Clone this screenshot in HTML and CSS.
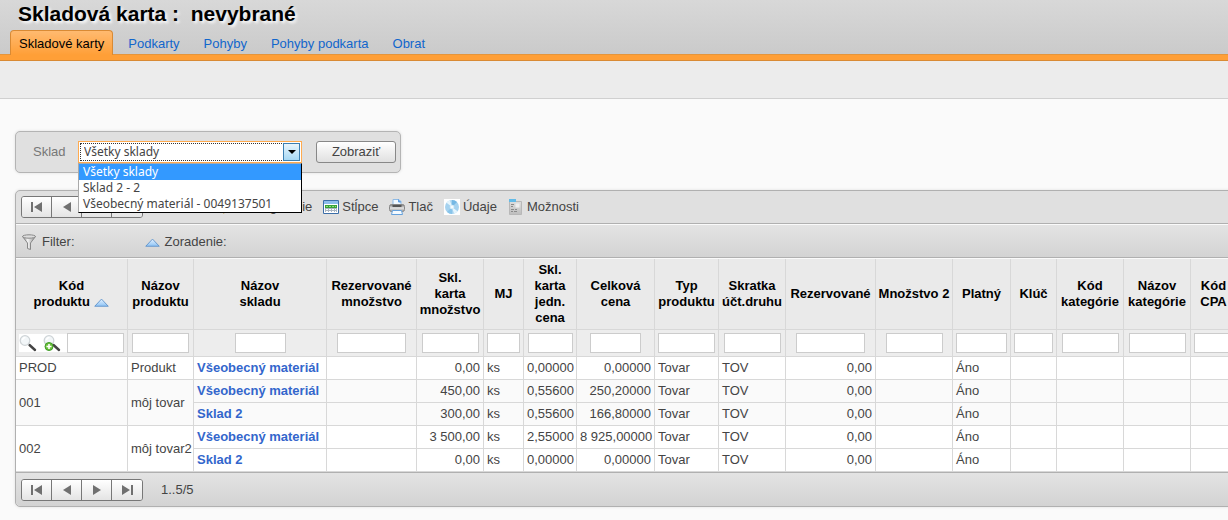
FILE: index.html
```html
<!DOCTYPE html>
<html lang="sk">
<head>
<meta charset="utf-8">
<title>Skladová karta</title>
<link rel="stylesheet" href="styles.css">
</head>
<body>
<svg class="defs" aria-hidden="true">
  <linearGradient id="sortFill" x1="0" y1="0" x2="0" y2="1"><stop offset="0" stop-color="#e6f3ff"/><stop offset="1" stop-color="#8cc2f5"/></linearGradient>
  <linearGradient id="steel" x1="0" y1="0" x2="1" y2="0"><stop offset="0" stop-color="#8a8a8a"/><stop offset=".4" stop-color="#f4f4f4"/><stop offset="1" stop-color="#8c8c8c"/></linearGradient>
  <linearGradient id="printer" x1="0" y1="0" x2="0" y2="1"><stop offset="0" stop-color="#777"/><stop offset=".5" stop-color="#e4e4e4"/><stop offset="1" stop-color="#999"/></linearGradient>
  <linearGradient id="sheet" x1="0" y1="0" x2="0" y2="1"><stop offset="0" stop-color="#dedede"/><stop offset="1" stop-color="#bdbdbd"/></linearGradient>
  <symbol id="i-sort" viewBox="0 0 14 8"><path d="M.7 7.5 7 .8l6.3 6.7z" fill="url(#sortFill)" stroke="#5a8fc8" stroke-width=".8"/></symbol>
  <symbol id="i-first" viewBox="0 0 12 10"><path d="M0 0h2v10H0zM11 0v10L3 5z" fill="#707070"/></symbol>
  <symbol id="i-prev" viewBox="0 0 12 10"><path d="M10 0v10L2 5z" fill="#707070"/></symbol>
  <symbol id="i-next" viewBox="0 0 12 10"><path d="M2 0v10l8-5z" fill="#707070"/></symbol>
  <symbol id="i-last" viewBox="0 0 12 10"><path d="M1 0v10l8-5zM10 0h2v10h-2z" fill="#707070"/></symbol>
  <symbol id="i-lens" viewBox="0 0 18 18"><path d="m10.500 11 5.500 5" stroke="#444" stroke-width="2.400" stroke-linecap="round"/><circle cx="6" cy="6.500" r="4.800" fill="#f2f6f8" stroke="#cfd4d7" stroke-width="1.300"/><path d="M3.500 6a3 3 0 0 1 3-2.500" fill="none" stroke="#fff" stroke-width="1.300"/></symbol>
</svg>

<header class="top">
  <h1 class="title">Skladová karta :&nbsp; nevybrané</h1>
  <nav class="tabs">
    <a class="tab tab-active" href="#karty">Skladové karty</a>
    <a class="tab" href="#podkarty">Podkarty</a>
    <a class="tab" href="#pohyby">Pohyby</a>
    <a class="tab" href="#pohyby-podkarta">Pohyby podkarta</a>
    <a class="tab" href="#obrat">Obrat</a>
  </nav>
</header>
<div class="band"></div>

<main class="content">
  <form class="search">
    <label class="search-label" for="sklad">Sklad</label>
    <div class="picker">
      <select class="select" id="sklad">
        <option>Všetky sklady</option>
        <option>Sklad 2 - 2</option>
        <option>Všeobecný materiál - 0049137501</option>
      </select>
      <span class="arrow"><svg width="8" height="4" viewBox="0 0 8 4"><path d="M0 0h8L4 4z"/></svg></span>
      <ul class="menu">
        <li class="menu-item menu-current">Všetky sklady</li>
        <li class="menu-item">Sklad 2 - 2</li>
        <li class="menu-item">Všeobecný materiál - 0049137501</li>
      </ul>
    </div>
    <button class="show" type="button">Zobraziť</button>
  </form>

  <section class="grid">
    <div class="bar toolbar">
      <div class="pager">
        <button class="page" type="button" aria-label="Prvá"><svg width="12" height="10"><use href="#i-first"/></svg></button>
        <button class="page" type="button" aria-label="Predošlá"><svg width="12" height="10"><use href="#i-prev"/></svg></button>
        <button class="page" type="button" aria-label="Ďalšia"><svg width="12" height="10"><use href="#i-next"/></svg></button>
        <button class="page" type="button" aria-label="Posledná"><svg width="12" height="10"><use href="#i-last"/></svg></button>
      </div>
      <div class="tools">
        <a class="tool" href="#konfiguracie"><svg width="16" height="16" viewBox="0 0 16 16"><path d="m2 14 1-4 8-8 3 3-8 8z" fill="#f5cf4d" stroke="#b78d23"/></svg>Konfigurácie</a>
        <a class="tool" href="#stlpce"><svg width="16" height="16" viewBox="0 0 16 16"><path d="M.5 1.500h15v13H.5z" fill="#fff" stroke="#3c6ea8"/><path d="M1 2h14v3H1z" fill="#8dbdec"/><path d="M2 6h12v3H2z" fill="#38a038"/><path d="M2 9h12v4H2z" fill="#aab6c2"/><path d="M3 7h2v1H3zm3 0h2v1H6zm3 0h2v1H9zm3 0h1v1h-1z" fill="#8be07d"/><path d="M3 10h2v1H3zm3 0h2v1H6zm3 0h2v1H9zm3 0h1v1h-1zM3 12h2v1H3zm3 0h2v1H6zm3 0h2v1H9zm3 0h1v1h-1z" fill="#fff"/></svg>Stĺpce</a>
        <a class="tool" href="#tlac"><svg width="16" height="16" viewBox="0 0 16 16"><path d="M4 7V.5h6l2 2V7z" fill="#f2f9ff" stroke="#8fbbe6"/><path d="M9.500.5V3H12" fill="#5d9ce0" stroke="#5d9ce0"/><rect x=".5" y="5.500" width="15" height="7" rx="2" fill="url(#printer)" stroke="#888"/><path d="M3.500 6h9v2h-9z" fill="#555"/><path d="M3.500 11.500h9l1 4h-11z" fill="#f4faff" stroke="#65a1dc"/></svg>Tlač</a>
        <a class="tool" href="#udaje"><svg width="16" height="16" viewBox="0 0 16 16"><path d="M0 0h16v16H0z" fill="#fff"/><circle cx="8" cy="8" r="7" fill="#a5d2ef"/><path d="M8 8 2.500 3.700A7 7 0 0 1 6 1.300zM8 8l5.500 4.300A7 7 0 0 1 10 14.700z" fill="#e5f5fd"/><path d="M8 8V1a7 7 0 0 1 5 2z" fill="#75b8e4"/><path d="M8 8v7a7 7 0 0 1-5-2z" fill="#88c4ea"/><circle cx="8" cy="8" r="2.300" fill="#d9edf8"/><circle cx="8" cy="8" r="1" fill="#fff"/></svg>Údaje</a>
        <a class="tool" href="#moznosti"><svg width="16" height="16" viewBox="0 0 16 16"><path d="M1.500 2.500h12v13h-12z" fill="url(#sheet)" stroke="#b8b8b8"/><path d="M1 0h7v3H1z" fill="#62bbe8"/><path d="M3 5.500h3M3 7.500h2M3 10.500h3M7 10.500h2M3 12.500h2M6 12.500h3" stroke="#8a8a8a"/><path d="M7.500 4.500h4v4h-4z" fill="#eee"/></svg>Možnosti</a>
      </div>
    </div>
    <div class="bar filters">
      <span class="tool"><svg width="16" height="16" viewBox="0 0 16 16"><path d="M1.500 2.500 6.500 9v5.500l3 1V9l5-6.500z" fill="url(#steel)" stroke="#888"/><ellipse cx="8" cy="2.500" rx="6.500" ry="1.700" fill="#ddd" stroke="#888"/></svg>Filter:</span>
      <span class="tool"><svg width="15" height="9"><use href="#i-sort"/></svg>Zoradenie:</span>
    </div>

    <table class="table">
      <colgroup><col class="w112"><col class="w66"><col class="w133"><col class="w90"><col class="w67"><col class="w40"><col class="w53"><col class="w78"><col class="w64"><col class="w67"><col class="w90"><col class="w77"><col class="w58"><col class="w46"><col class="w67"><col class="w67"><col class="w46"></colgroup>
      <thead>
        <tr class="heads"><th>Kód<br>produktu <svg class="sorted" width="15" height="9"><use href="#i-sort"/></svg></th><th>Názov produktu</th><th>Názov<br>skladu</th><th>Rezervované množstvo</th><th>Skl.<br>karta množstvo</th><th>MJ</th><th>Skl.<br>karta<br>jedn.<br>cena</th><th>Celková cena</th><th>Typ produktu</th><th>Skratka účt.druhu</th><th>Rezervované</th><th>Množstvo 2</th><th>Platný</th><th>Klúč</th><th>Kód kategórie</th><th>Názov kategórie</th><th>Kód CPA</th></tr>
        <tr class="inputs">
          <td><div class="find"><button class="lens" type="button" aria-label="Hľadať"><svg width="18" height="18"><use href="#i-lens"/></svg></button><button class="lens" type="button" aria-label="Pridať hľadanie"><svg width="18" height="18" viewBox="0 0 18 18"><use href="#i-lens"/><circle cx="6" cy="12.500" r="4" fill="#6cc23a" stroke="#3f9a2a"/><path d="M6 10v5M3.500 12.500h5" stroke="#fff" stroke-width="1.600"/></svg></button><input class="w57" aria-label="Kód produktu"></div></td>
          <td><input class="w57" aria-label="Názov produktu"></td><td><input class="w51" aria-label="Názov skladu"></td><td><input class="w69" aria-label="Rezervované množstvo"></td><td><input class="w57" aria-label="Skl. karta množstvo"></td><td><input class="w33" aria-label="MJ"></td><td><input class="w45" aria-label="Skl. karta jedn. cena"></td><td><input class="w51" aria-label="Celková cena"></td><td><input class="w57" aria-label="Typ produktu"></td><td><input class="w57" aria-label="Skratka účt.druhu"></td><td><input class="w69" aria-label="Rezervované"></td><td><input class="w57" aria-label="Množstvo 2"></td><td><input class="w51" aria-label="Platný"></td><td><input class="w39" aria-label="Klúč"></td><td><input class="w57" aria-label="Kód kategórie"></td><td><input class="w57" aria-label="Názov kategórie"></td><td><input class="w39" aria-label="Kód CPA"></td>
        </tr>
      </thead>
      <tbody>
        <tr><td>PROD</td><td>Produkt</td><td><a href="#s1">Všeobecný materiál</a></td><td></td><td class="num">0,00</td><td>ks</td><td class="num">0,00000</td><td class="num">0,00000</td><td>Tovar</td><td>TOV</td><td class="num">0,00</td><td></td><td>Áno</td><td></td><td></td><td></td><td></td></tr>
        <tr class="alt"><td rowspan="2">001</td><td rowspan="2">môj tovar</td><td><a href="#s1">Všeobecný materiál</a></td><td></td><td class="num">450,00</td><td>ks</td><td class="num">0,55600</td><td class="num">250,20000</td><td>Tovar</td><td>TOV</td><td class="num">0,00</td><td></td><td>Áno</td><td></td><td></td><td></td><td></td></tr>
        <tr class="alt"><td><a href="#s2">Sklad 2</a></td><td></td><td class="num">300,00</td><td>ks</td><td class="num">0,55600</td><td class="num">166,80000</td><td>Tovar</td><td>TOV</td><td class="num">0,00</td><td></td><td>Áno</td><td></td><td></td><td></td><td></td></tr>
        <tr><td rowspan="2">002</td><td rowspan="2">môj tovar2</td><td><a href="#s1">Všeobecný materiál</a></td><td></td><td class="num">3 500,00</td><td>ks</td><td class="num">2,55000</td><td class="num">8 925,00000</td><td>Tovar</td><td>TOV</td><td class="num">0,00</td><td></td><td>Áno</td><td></td><td></td><td></td><td></td></tr>
        <tr><td><a href="#s2">Sklad 2</a></td><td></td><td class="num">0,00</td><td>ks</td><td class="num">0,00000</td><td class="num">0,00000</td><td>Tovar</td><td>TOV</td><td class="num">0,00</td><td></td><td>Áno</td><td></td><td></td><td></td><td></td></tr>
      </tbody>
    </table>

    <div class="bar footer">
      <div class="pager">
        <button class="page" type="button" aria-label="Prvá"><svg width="12" height="10"><use href="#i-first"/></svg></button>
        <button class="page" type="button" aria-label="Predošlá"><svg width="12" height="10"><use href="#i-prev"/></svg></button>
        <button class="page" type="button" aria-label="Ďalšia"><svg width="12" height="10"><use href="#i-next"/></svg></button>
        <button class="page" type="button" aria-label="Posledná"><svg width="12" height="10"><use href="#i-last"/></svg></button>
      </div>
      <span>1..5/5</span>
    </div>
  </section>
</main>
</body>
</html>
```
FILE: styles.css
```css
* { box-sizing: border-box; }
body {
  margin: 0;
  background: #fafafa;
  color: #444;
  font: 13px/16px "Liberation Sans", Arial, sans-serif;
  overflow-x: hidden;
}
.defs { position: absolute; width: 0; height: 0; }
svg { flex: none; }

.top {
  background: linear-gradient(#d8d8d8, #cacaca);
  border-bottom: 5px solid #ff9f37;
  box-shadow: inset 0 -1px #e5953b;
}
.title {
  margin: 0;
  padding: 1px 18px 4px;
  color: #000;
  font-size: 21px;
  line-height: 25px;
  text-shadow: 2px 2px 3px #fff;
}
.tabs { display: flex; gap: 6px; padding-left: 10px; }
.tab {
  padding: 5px 8px 3px;
  border: 1px solid transparent;
  border-bottom: 0;
  border-radius: 4px 4px 0 0;
  color: #1166cc;
  text-decoration: none;
}
.tab-active {
  background: linear-gradient(#ffba70, #ff9f37);
  border-color: #d98a34;
  color: #000;
}
.band { height: 39px; background: #ececec; border-top: 1px solid #d98a34; border-bottom: 1px solid #d0d0d0; }

.content { padding: 32px 0 14px 15px; }
.search {
  display: flex;
  align-items: center;
  width: max-content;
  margin-bottom: 17px;
  padding: 9px 4px 9px 17px;
  background: #e0e0e0;
  border: 1px solid #b4b4b4;
  border-radius: 5px;
  box-shadow: 0 0 3px #ddd;
}
.search-label { width: 45px; color: #777; }
.picker {
  position: relative;
  width: 224px;
  margin-right: 14px;
  font-family: "Noto Sans", Tahoma, sans-serif;
  font-size: 12px;
}
.select {
  display: block;
  width: 100%;
  height: 22px;
  padding: 0 5px;
  appearance: none;
  background: #fff;
  border: 1px solid #ffab50;
  border-radius: 0;
  outline: 1px dotted #333;
  outline-offset: -3px;
  color: #444;
  font: inherit;
}
.arrow {
  position: absolute;
  top: 2px;
  right: 2px;
  display: flex;
  align-items: center;
  justify-content: center;
  width: 17px;
  height: 18px;
  background: linear-gradient(#eaf6fd, #a7d9f5);
  border: 1px solid #3c7fb1;
  pointer-events: none;
}
.menu {
  position: absolute;
  z-index: 1;
  top: 22px;
  left: 0;
  width: 100%;
  margin: 0;
  padding: 0;
  list-style: none;
  background: #fff;
  border: 1px solid #000;
  border-color: #aaa #000 #000 #aaa;
}
.menu-item { padding: 0 4px; }
.menu-current { background: #3399ff; color: #fff; }
.show {
  width: 80px;
  height: 22px;
  padding: 0;
  background: linear-gradient(#fff, #e0e0e0);
  border: 1px solid #888;
  border-radius: 3px;
  color: #444;
  font: inherit;
}

.grid {
  width: max-content;
  min-width: 100%;
  background: #e0e0e0;
  border: 1px solid #b0b0b0;
  border-radius: 5px;
  box-shadow: 0 0 3px #ddd;
}
.bar { display: flex; align-items: center; padding: 0 5px; }
.toolbar { height: 33px; border-bottom: 1px solid #b0b0b0; }
.filters {
  gap: 70px;
  height: 34px;
  background: linear-gradient(#e3e3e3, #d3d3d3);
  border-top: 1px solid #fafafa;
  border-bottom: 1px solid #b0b0b0;
}
.filters .tool { gap: 5px; padding-top: 2px; }
.footer {
  gap: 18px;
  height: 34px;
  background: linear-gradient(#e3e3e3, #d3d3d3);
  border-top: 1px solid #b0b0b0;
  border-radius: 0 0 5px 5px;
}
.pager {
  display: flex;
  border: 1px solid #777;
  border-radius: 3px;
  overflow: hidden;
}
.page {
  display: flex;
  align-items: center;
  justify-content: center;
  width: 30px;
  height: 20px;
  padding: 0;
  background: linear-gradient(#fff, #e4e4e4);
  border: 0;
  border-right: 1px solid #777;
}
.page:last-child { border-right: 0; }
.tools { display: flex; gap: 11px; margin-left: 78px; }
.tool { display: flex; align-items: center; gap: 3px; color: #444; text-decoration: none; }

.table { width: 1221px; border-collapse: separate; border-spacing: 0; table-layout: fixed; border-top: 1px solid #fafafa; }
.table th, .table td {
  height: 23px;
  padding: 0 3px;
  border: solid #d8d8d8;
  border-width: 0 1px 1px 0;
  text-align: left;
  white-space: nowrap;
}
.table th { height: 71px; padding: 0; background: #eaeaea; color: #000; text-align: center; white-space: normal; }
.table tbody { background: #fff; }
.table .alt { background: #fafafa; }
.table .num { text-align: right; }
.table a { color: #3366cc; font-weight: bold; text-decoration: none; }
.table .inputs td { height: 27px; padding: 0; background: #ededed; text-align: center; }
.table input { height: 20px; padding: 0 2px; border: 1px solid #ccc; background: #fff; vertical-align: middle; }
.find { display: flex; align-items: center; padding-left: 3px; }
.lens { width: 24px; height: 18px; padding: 0; background: #fff; border: 0; line-height: 0; text-align: left; }
.sorted { margin-left: 1px; vertical-align: -1px; }
.w33 { width: 33px; } .w39 { width: 39px; } .w40 { width: 40px; } .w45 { width: 45px; }
.w46 { width: 46px; } .w51 { width: 51px; } .w53 { width: 53px; } .w57 { width: 57px; }
.w58 { width: 58px; } .w64 { width: 64px; } .w66 { width: 66px; } .w67 { width: 67px; }
.w69 { width: 69px; } .w77 { width: 77px; } .w78 { width: 78px; } .w90 { width: 90px; }
.w112 { width: 112px; } .w133 { width: 133px; }
```
